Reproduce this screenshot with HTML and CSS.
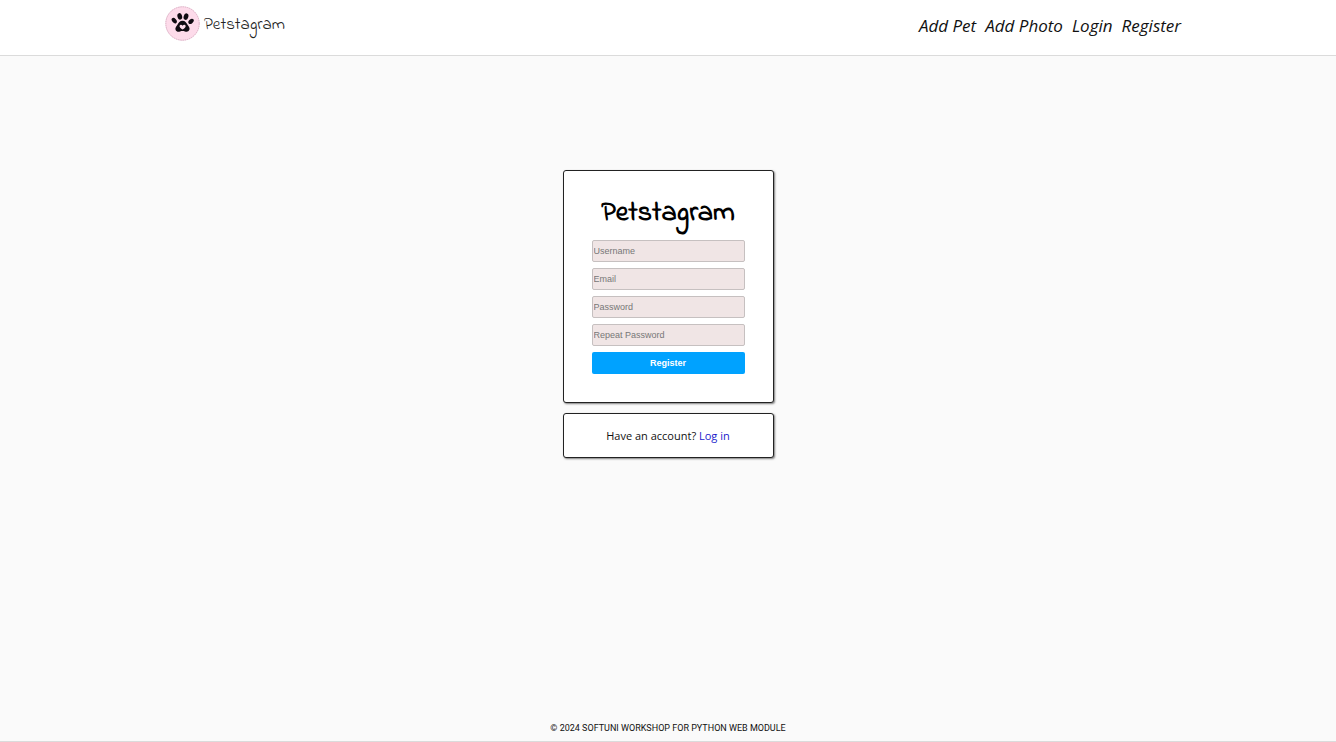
FILE: index.html
```html
<!DOCTYPE html>
<html lang="en">
<head>
<meta charset="utf-8">
<meta name="viewport" content="width=device-width, initial-scale=1">
<title>Petstagram</title>
<link rel="stylesheet" href="styles.css">
</head>
<body>
<header class="site-header">
  <nav class="navbar" aria-label="Main">
    <a class="brand" href="#">
      <svg class="brand-mark" viewBox="0 0 36 36" aria-hidden="true">
        <circle cx="18" cy="18" r="17.5" fill="#fddbea"/>
        <circle cx="18" cy="18" r="17.2" fill="none" stroke="#d9b0c3" stroke-width="1" stroke-dasharray="1.6 .7"/>
        <g fill="#100c12">
          <ellipse cx="15.2" cy="10.7" rx="2.4" ry="3.4" transform="rotate(-14 15.2 10.7)"/>
          <ellipse cx="21.6" cy="10.9" rx="2.4" ry="3.4" transform="rotate(16 21.6 10.9)"/>
          <ellipse cx="9.5" cy="15" rx="2.1" ry="3.2" transform="rotate(-42 9.5 15)"/>
          <ellipse cx="26.8" cy="15.8" rx="2.1" ry="3.2" transform="rotate(48 26.8 15.8)"/>
          <path d="M18.1 15.2c-2.8 0-4.1 2-5.3 4-1.2 1.8-2.7 3.2-1.9 5.4.8 2 3 2.1 4.6 1.5 1.7-.6 3.3-.6 5 0 1.7.6 3.9.4 4.6-1.6.7-2.1-.7-3.5-1.9-5.3-1.3-2-2.5-4-5.1-4z"/>
        </g>
        <path d="M18.1 24.2c-1.8-1.1-3.6-2.3-3.1-3.9.5-1.3 2.3-1.3 3.1.1.8-1.4 2.7-1.4 3.1-.1.5 1.6-1.3 2.8-3.1 3.9z" fill="#fddbea"/>
      </svg>
      <span class="brand-name">Petstagram</span>
    </a>
    <ul class="menu">
      <li><a href="#">Add Pet</a></li>
      <li><a href="#">Add Photo</a></li>
      <li><a href="#">Login</a></li>
      <li><a href="#">Register</a></li>
    </ul>
  </nav>
</header>
<main class="content">
  <section class="card register">
    <h1 class="title">Petstagram</h1>
    <form class="form">
      <input class="field" type="text" placeholder="Username" aria-label="Username">
      <input class="field" type="email" placeholder="Email" aria-label="Email">
      <input class="field" type="password" placeholder="Password" aria-label="Password">
      <input class="field" type="password" placeholder="Repeat Password" aria-label="Repeat Password">
      <button class="submit" type="submit">Register</button>
    </form>
  </section>
  <section class="card login">
    <p>Have an account? <a href="#">Log in</a></p>
  </section>
</main>
<footer class="site-footer">© 2024 SOFTUNI WORKSHOP FOR PYTHON WEB MODULE</footer>
</body>
</html>
```
FILE: styles.css
```css
* { box-sizing: border-box; }
body {
  margin: 0;
  min-height: 100vh;
  display: flex;
  flex-direction: column;
  background: #fafafa;
  color: #111;
  font-family: "Open Sans", sans-serif;
}
a { text-decoration: none; }
.site-header {
  background: #fff;
  border-bottom: 1px solid #dbdbdb;
}
.navbar {
  max-width: 1026px;
  margin: 0 auto;
  padding: 6px 0 14px 10px;
  display: flex;
  justify-content: space-between;
  align-items: center;
}
.brand {
  display: flex;
  align-items: center;
  gap: 4px;
  color: #222;
}
.brand-mark { width: 35px; height: 35px; }
.brand-name {
  padding-top: 3px;
  font: 400 17px/24px "Indie Flower", cursive;
}
.menu {
  display: flex;
  gap: 9px;
  margin: 0;
  padding: 5px 0 0;
  list-style: none;
}
.menu a {
  color: #111;
  font-size: 17px;
  line-height: 24px;
  font-style: italic;
}
.content {
  flex: 1;
  display: flex;
  flex-direction: column;
  align-items: center;
  gap: 10px;
  padding-top: 114px;
}
.card {
  width: 211px;
  background: #fff;
  border: 1px solid #222;
  border-radius: 3px;
  box-shadow: 1px 1px 2px rgba(0, 0, 0, .5);
}
.register { padding: 22px 28px 28px; }
.title {
  margin: 0 0 5px;
  text-align: center;
  color: #000;
  font: 700 28px/42px "Indie Flower", cursive;
}
.form {
  display: flex;
  flex-direction: column;
  gap: 6px;
}
.field,
.submit {
  width: 100%;
  height: 22px;
  border-radius: 2px;
  font-family: "Liberation Sans", Arial, sans-serif;
  font-size: 9px;
}
.field {
  padding: 0 1px;
  background: #f0e5e5;
  border: 1px solid #c6c0c0;
  color: #222;
}
.field::placeholder { color: #777; }
.submit {
  padding: 0;
  border: 0;
  background: #00a2ff;
  color: #fff;
  font-weight: 700;
}
.login {
  padding: 13px 0;
  text-align: center;
}
.login p {
  margin: 0;
  font-size: 11px;
  line-height: 17px;
}
.login a { color: #1a1acb; }
.site-footer {
  padding: 6px 0;
  border-bottom: 1px solid #dbdbdb;
  text-align: center;
  font: 9px/14px Roboto, Arial, sans-serif;
}
```
